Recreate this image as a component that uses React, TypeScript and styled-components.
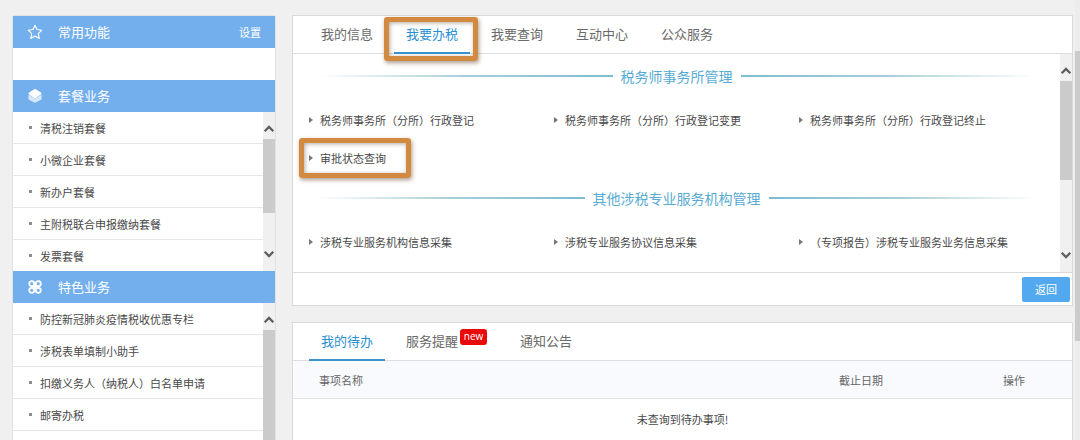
import React from "react";
import styled, { createGlobalStyle, css } from "styled-components";

const GlobalStyle = createGlobalStyle`
  *, *::before, *::after { box-sizing: border-box; }
  body {
    margin: 0;
    overflow: hidden;
    background: #f0f0f0;
    color: #484848;
    font-family: "Noto Sans CJK SC", "Noto Sans", sans-serif;
    font-size: 11px;
    line-height: 16px;
  }
  button { font: inherit; border: 0; padding: 0; background: none; color: inherit; cursor: pointer; }
  a { color: inherit; text-decoration: none; }
  ul { list-style: none; margin: 0; padding: 0; }
  h2, h3 { margin: 0; font-weight: 400; }
`;

const Page = styled.div`
  display: flex;
  height: 100vh;
`;

const Columns = styled.div`
  flex: 1;
  min-width: 0;
  display: grid;
  grid-template-columns: 264px minmax(0, 1fr);
  gap: 16px;
  padding: 15px 2px 0 12px;
`;

const Sidebar = styled.aside`
  display: flex;
  flex-direction: column;
  border: 1px solid #e0e2e5;
  border-bottom: 0;
  border-radius: 3px 3px 0 0;
  background: #fff;
`;

const SideHeader = styled.header`
  flex: none;
  display: flex;
  align-items: center;
  height: 32px;
  padding: 0 14px;
  background: #73afed;
  color: #fff;
`;

const SideTitle = styled.h2`
  flex: 1;
  margin-left: 15px;
  font-size: 13px;
  line-height: 20px;
`;

const EmptyShortcuts = styled.div`
  flex: none;
  height: 32px;
`;

const ScrollArea = styled.div<{ $fill?: boolean }>`
  display: flex;
  flex: ${(p) => (p.$fill ? "1" : "none")};
  min-height: 0;
`;

const SideList = styled.ul`
  flex: 1;
`;

const SideItem = styled.li<{ $last?: boolean }>`
  height: ${(p) => (p.$last ? 31 : 32)}px;
  border-bottom: ${(p) => (p.$last ? "0" : "1px solid #e6e6e6")};
`;

const SideLink = styled.a`
  display: flex;
  align-items: center;
  height: 31px;
  padding-left: 16px;

  &::before {
    content: "";
    width: 3px;
    height: 3px;
    margin-right: 8px;
    background: #8c8c8c;
  }
`;

const Track = styled.div`
  flex: none;
  display: flex;
  flex-direction: column;
  width: 12px;
  background: #f0f0f0;
`;

const ArrowButton = styled.button<{ $down?: boolean }>`
  flex: none;
  display: flex;
  justify-content: center;
  align-items: center;
  height: 27px;
  padding-top: 7px;
  ${(p) =>
    p.$down &&
    css`
      margin-top: auto;
      transform: rotate(180deg);
    `}
`;

const Thumb = styled.div<{ $height?: number }>`
  ${(p) => (p.$height ? `height: ${p.$height}px;` : "flex: 1;")}
  background: #cbcbcb;
`;

const Main = styled.main`
  display: flex;
  flex-direction: column;
  gap: 16px;
  min-width: 0;
`;

const Card = styled.section<{ $fill?: boolean }>`
  flex: ${(p) => (p.$fill ? "1" : "none")};
  border: 1px solid #dadada;
  ${(p) => p.$fill && "border-bottom: 0;"}
  background: #fff;
`;

const Tabs = styled.div`
  display: flex;
  gap: 9px;
  height: 38px;
  padding-left: 16px;
  border-bottom: 1px solid #dedede;
`;

const Tab = styled.button<{ $active?: boolean }>`
  position: relative;
  display: flex;
  align-items: center;
  height: 38px;
  padding: 0 12px;
  font-size: 13px;
  line-height: 20px;
  color: ${(p) => (p.$active ? "#2a8fd3" : "#6a6a6a")};
  border-bottom: 2px solid ${(p) => (p.$active ? "#3a93cc" : "transparent")};
`;

const Highlight = styled.span<{ $kind: "tab" | "link" }>`
  position: absolute;
  inset: ${(p) => (p.$kind === "tab" ? "1px -8px -9px -10px" : "-1px auto -1px -10px")};
  ${(p) => p.$kind === "link" && "width: 112px;"}
  border: 5px solid #d18a40;
  border-radius: 3px;
  box-shadow: 1px 2px 4px rgba(90, 60, 30, 0.5), inset 1px 1px 4px rgba(90, 70, 50, 0.45);
  pointer-events: none;
`;

const NewBadge = styled.span`
  align-self: flex-start;
  width: 27px;
  height: 16px;
  margin: 6px 0 0 2px;
  border-radius: 3px;
  background: #ea0a0a;
  color: #fff;
  font-family: "Open Sans", "Noto Sans", sans-serif;
  font-size: 10px;
  line-height: 15px;
  text-align: center;
`;

const ServiceArea = styled.div`
  flex: 1;
  height: 218px;
  padding-top: 2px;
`;

const SectionTitle = styled.h3`
  display: flex;
  align-items: center;
  gap: 8px;
  height: 39px;
  margin-bottom: 6px;
  padding: 0 24px;
  font-size: 14px;
  line-height: 20px;
  color: #57abd2;

  &::before,
  &::after {
    content: "";
    flex: 1;
    height: 2px;
    background: linear-gradient(to left, #7dbcd2, #a9ced8 50%, rgba(200, 225, 232, 0));
  }

  &::after {
    background: linear-gradient(to right, #7dbcd2, #a9ced8 50%, rgba(200, 225, 232, 0));
  }
`;

const LinkGrid = styled.ul`
  display: grid;
  grid-template-columns: repeat(3, 1fr);
  padding: 0 16px 1px;
`;

const ServiceItem = styled.li`
  position: relative;
  display: flex;
  align-items: center;
  height: 38px;
`;

const ServiceLink = styled.a`
  display: flex;
  align-items: center;
  white-space: nowrap;

  &::before {
    content: "";
    margin-right: 7px;
    border-left: 4px solid #777;
    border-top: 3px solid transparent;
    border-bottom: 3px solid transparent;
  }
`;

const CardFooter = styled.footer`
  display: flex;
  justify-content: flex-end;
  align-items: center;
  height: 33px;
  padding-right: 2px;
  border-top: 1px solid #dadada;
`;

const BackButton = styled.button`
  width: 48px;
  height: 25px;
  border-radius: 2px;
  background: #53a9ef;
  color: #fff;
`;

const TodoTable = styled.table`
  width: 100%;
  table-layout: fixed;
  border-collapse: separate;
  border-spacing: 0;
`;

const HeadCell = styled.th<{ $width?: number }>`
  height: 38px;
  padding: ${(p) => (p.$width ? "0" : "0 0 0 26px")};
  ${(p) => p.$width && `width: ${p.$width}px;`}
  border-bottom: 1px solid #e2e4e6;
  background: #f8fafe;
  font-weight: 400;
  color: #666;
  text-align: ${(p) => (p.$width ? "center" : "left")};
`;

const EmptyCell = styled.td`
  height: 40px;
  padding: 0;
  text-align: center;
`;

const PageTrack = styled.div`
  flex: none;
  width: 5px;
  padding-top: 51px;
  background: #ececec;
`;

function StarIcon() {
  return (
    <svg width="16" height="16" viewBox="0 0 16 16" fill="none" stroke="#fff" strokeWidth="1.1" strokeLinejoin="round" aria-hidden="true">
      <path d="M8 1.2 10 5.5 14.8 6.2 11.3 9.6 12.2 14.4 8 12.1 3.8 14.4 4.7 9.6 1.2 6.2 6 5.5Z" />
    </svg>
  );
}

function LayersIcon() {
  return (
    <svg width="16" height="16" viewBox="0 0 16 16" fill="#fff" aria-hidden="true">
      <path d="M1.4 6.8 8 10.6l6.600-3.800v4c0 .5-.2.8-.6 1L8.700 14.600c-.5.2-.9.2-1.400 0L2 11.800c-.4-.2-.6-.5-.6-1Z" opacity=".7" />
      <path d="M7.300 1.300c.5-.3.900-.3 1.400 0l5.200 3.300c.8.500.8 1.500 0 2L8.700 9.900c-.5.3-.9.3-1.400 0L2.100 6.600c-.8-.5-.8-1.500 0-2Z" />
    </svg>
  );
}

function CloverIcon() {
  return (
    <svg width="16" height="16" viewBox="0 0 16 16" fill="none" stroke="#fff" strokeWidth="1.8" aria-hidden="true">
      <circle cx="4.7" cy="4.7" r="2.5" />
      <circle cx="11.3" cy="4.7" r="2.5" />
      <circle cx="4.7" cy="11.3" r="2.5" />
      <circle cx="11.3" cy="11.3" r="2.5" />
      <path d="M6.5 6.5 9.5 9.5M9.5 6.5 6.5 9.5" />
    </svg>
  );
}

function Chevron() {
  return (
    <svg width="12" height="8" viewBox="0 0 12 8" fill="none" stroke="#5c5c5c" strokeWidth="2.2" aria-hidden="true">
      <path d="M1.7 6.3 6 1.9 10.3 6.3" />
    </svg>
  );
}

function Scrollbar({ thumb }: { thumb?: number }) {
  return (
    <Track>
      <ArrowButton aria-label="向上滚动">
        <Chevron />
      </ArrowButton>
      <Thumb $height={thumb} />
      {thumb && (
        <ArrowButton $down aria-label="向下滚动">
          <Chevron />
        </ArrowButton>
      )}
    </Track>
  );
}

function SideItems({ items, open }: { items: string[]; open?: boolean }) {
  return (
    <SideList>
      {items.map((item, i) => (
        <SideItem key={item} $last={!open && i === items.length - 1}>
          <SideLink href="#">{item}</SideLink>
        </SideItem>
      ))}
    </SideList>
  );
}

const packages = ["清税注销套餐", "小微企业套餐", "新办户套餐", "主附税联合申报缴纳套餐", "发票套餐"];
const features = ["防控新冠肺炎疫情税收优惠专栏", "涉税表单填制小助手", "扣缴义务人（纳税人）白名单申请", "邮寄办税"];
const mainTabs = ["我的信息", "我要办税", "我要查询", "互动中心", "公众服务"];
const todoTabs = ["我的待办", "服务提醒", "通知公告"];

const sections = [
  {
    title: "税务师事务所管理",
    links: [
      "税务师事务所（分所）行政登记",
      "税务师事务所（分所）行政登记变更",
      "税务师事务所（分所）行政登记终止",
      "审批状态查询",
    ],
  },
  {
    title: "其他涉税专业服务机构管理",
    links: ["涉税专业服务机构信息采集", "涉税专业服务协议信息采集", "（专项报告）涉税专业服务业务信息采集"],
  },
];

export default function App() {
  return (
    <>
      <GlobalStyle />
      <Page>
        <Columns>
          <Sidebar>
            <SideHeader>
              <StarIcon />
              <SideTitle>常用功能</SideTitle>
              <button>设置</button>
            </SideHeader>
            <EmptyShortcuts />
            <SideHeader>
              <LayersIcon />
              <SideTitle>套餐业务</SideTitle>
            </SideHeader>
            <ScrollArea>
              <SideItems items={packages} />
              <Scrollbar thumb={74} />
            </ScrollArea>
            <SideHeader>
              <CloverIcon />
              <SideTitle>特色业务</SideTitle>
            </SideHeader>
            <ScrollArea $fill>
              <SideItems items={features} open />
              <Scrollbar />
            </ScrollArea>
          </Sidebar>

          <Main>
            <Card>
              <Tabs role="tablist">
                {mainTabs.map((tab) => {
                  const active = tab === "我要办税";
                  return (
                    <Tab key={tab} role="tab" aria-selected={active} $active={active}>
                      {tab}
                      {active && <Highlight $kind="tab" />}
                    </Tab>
                  );
                })}
              </Tabs>
              <ScrollArea>
                <ServiceArea>
                  {sections.map((section) => (
                    <section key={section.title}>
                      <SectionTitle>{section.title}</SectionTitle>
                      <LinkGrid>
                        {section.links.map((link) => (
                          <ServiceItem key={link}>
                            <ServiceLink href="#">{link}</ServiceLink>
                            {link === "审批状态查询" && <Highlight $kind="link" />}
                          </ServiceItem>
                        ))}
                      </LinkGrid>
                    </section>
                  ))}
                </ServiceArea>
                <Scrollbar thumb={99} />
              </ScrollArea>
              <CardFooter>
                <BackButton>返回</BackButton>
              </CardFooter>
            </Card>

            <Card $fill>
              <Tabs role="tablist">
                {todoTabs.map((tab, i) => (
                  <Tab key={tab} role="tab" aria-selected={i === 0} $active={i === 0}>
                    {tab}
                    {tab === "服务提醒" && <NewBadge>new</NewBadge>}
                  </Tab>
                ))}
              </Tabs>
              <TodoTable>
                <thead>
                  <tr>
                    <HeadCell scope="col">事项名称</HeadCell>
                    <HeadCell scope="col" $width={190}>截止日期</HeadCell>
                    <HeadCell scope="col" $width={116}>操作</HeadCell>
                  </tr>
                </thead>
                <tbody>
                  <tr>
                    <EmptyCell colSpan={3}>未查询到待办事项!</EmptyCell>
                  </tr>
                </tbody>
              </TodoTable>
            </Card>
          </Main>
        </Columns>
        <PageTrack>
          <Thumb $height={290} />
        </PageTrack>
      </Page>
    </>
  );
}
